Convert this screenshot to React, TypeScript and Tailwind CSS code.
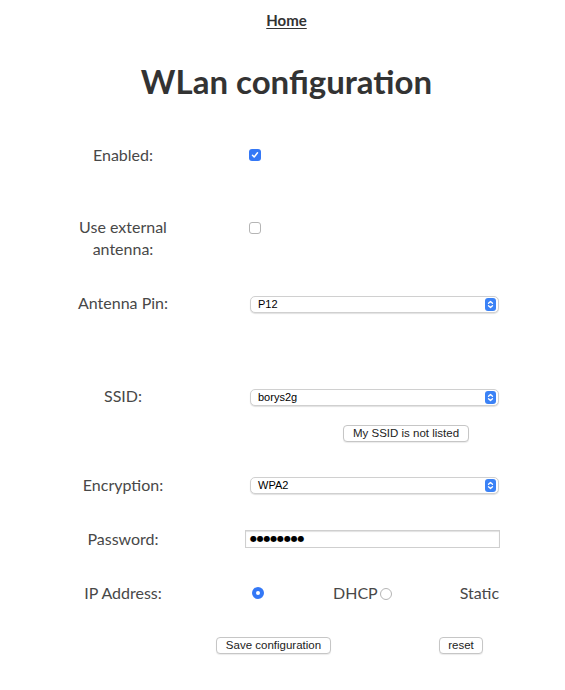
import React from 'react';

const Chevrons = () => (
  <span className="flex h-[13px] w-[11px] items-center justify-center rounded-[3px] bg-[#3b82f6]">
    <svg width="7" height="9" viewBox="0 0 7 9" fill="none" stroke="white" strokeWidth="1.3" strokeLinecap="round" strokeLinejoin="round">
      <path d="M1.5 3.2 L3.5 1.4 L5.5 3.2" />
      <path d="M1.5 5.8 L3.5 7.6 L5.5 5.8" />
    </svg>
  </span>
);

const Select = ({ value }: { value: string }) => (
  <div className="ml-[5px] flex h-[17px] w-[249px] items-center justify-between rounded-[5px] border border-[#d0d0d0] bg-white pl-[7px] pr-[2px] text-[11px] text-black shadow-[0_1px_1px_rgba(0,0,0,0.12)] [font-family:'Liberation_Sans',Arial,sans-serif]">
    <span>{value}</span>
    <Chevrons />
  </div>
);

const SmallButton = ({ children, className = '' }: { children: React.ReactNode; className?: string }) => (
  <div className={`flex h-[17px] items-center justify-center rounded-[4px] border border-[#c6c6c6] bg-white text-[11.5px] text-[#222] shadow-[0_1px_1px_rgba(0,0,0,0.08)] [font-family:'Liberation_Sans',Arial,sans-serif] ${className}`}>
    {children}
  </div>
);

const Label = ({ children }: { children: React.ReactNode }) => (
  <div className="w-[150px] ml-[48px] text-center text-[16px] leading-[22px] text-[#484848]">{children}</div>
);

const CheckOn = () => (
  <span className="flex h-[12px] w-[12px] items-center justify-center rounded-[3px] bg-[#3478f6]">
    <svg width="8" height="8" viewBox="0 0 8 8" fill="none" stroke="white" strokeWidth="1.5" strokeLinecap="round" strokeLinejoin="round">
      <path d="M1.5 4.2 L3.2 6 L6.5 1.8" />
    </svg>
  </span>
);

const CheckOff = () => (
  <span className="block h-[12px] w-[12px] rounded-[3px] border border-[#b5b5b5] bg-white" />
);

export default function App() {
  return (
    <div className="min-h-screen w-[565px] bg-white text-[#333] [font-family:Lato,'Open_Sans',sans-serif]">
      <div className="pl-[8px] pt-[8px] text-center">
        <a className="text-[15px] font-bold leading-[22px] text-[#333] underline underline-offset-2">Home</a>
      </div>

      <h1 className="mt-[27px] pl-[8px] text-center text-[33px] font-bold leading-[44px] text-[#333]">WLan configuration</h1>

      <div className="mt-[41px] flex">
        <Label>Enabled:</Label>
        <div className="ml-[51px] pt-[5px]"><CheckOn /></div>
      </div>

      <div className="mt-[50px] flex">
        <Label>Use external<br />antenna:</Label>
        <div className="ml-[51px] pt-[6px]"><CheckOff /></div>
      </div>

      <div className="mt-[32px] flex">
        <Label>Antenna Pin:</Label>
        <div className="ml-[47px] pt-[4px]"><Select value="P12" /></div>
      </div>

      <div className="mt-[71px] flex">
        <Label>SSID:</Label>
        <div className="ml-[47px] flex flex-col pt-[4px]">
          <Select value="borys2g" />
          <SmallButton className="ml-[98px] mt-[19px] w-[126px]">My SSID is not listed</SmallButton>
        </div>
      </div>

      <div className="mt-[32px] flex">
        <Label>Encryption:</Label>
        <div className="ml-[47px] pt-[3px]"><Select value="WPA2" /></div>
      </div>

      <div className="mt-[32px] flex">
        <Label>Password:</Label>
        <div className="ml-[47px] pt-[2px]">
          <div className="flex h-[18px] w-[255px] items-center border border-[#cfcfcf] bg-white pl-[4px] shadow-[inset_0_1px_1px_rgba(0,0,0,0.12)] text-[8px] tracking-[-0.2px] text-black [font-family:'DejaVu_Sans',sans-serif]">
            ●●●●●●●●
          </div>
        </div>
      </div>

      <div className="mt-[32px] flex items-start">
        <Label>IP Address:</Label>
        <div className="ml-[54px] mt-[5px] flex h-[12px] w-[12px] items-center justify-center rounded-full bg-[#3478f6]">
          <span className="h-[4px] w-[4px] rounded-full bg-white" />
        </div>
        <div className="ml-[69px] text-[16px] leading-[22px] text-[#484848]">DHCP</div>
        <div className="ml-[2px] mt-[6px] h-[12px] w-[12px] rounded-full border border-[#b5b5b5] bg-white" />
        <div className="ml-[68px] text-[16px] leading-[22px] text-[#484848]">Static</div>
      </div>

      <div className="mt-[33px] flex pb-[30px]">
        <SmallButton className="ml-[216px] w-[115px]">Save configuration</SmallButton>
        <SmallButton className="ml-[108px] w-[44px]">reset</SmallButton>
      </div>
    </div>
  );
}
